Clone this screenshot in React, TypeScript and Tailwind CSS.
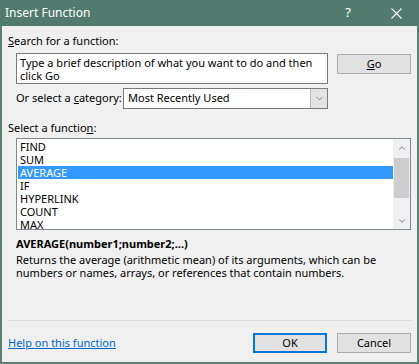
import { ChevronDown, ChevronUp } from "lucide-react";

const functions = ["FIND", "SUM", "AVERAGE", "IF", "HYPERLINK", "COUNT", "MAX"];

export default function App() {
  return (
    <div className="w-[419px] h-[364px] flex flex-col font-['Noto_Sans',sans-serif] text-[11px] text-black select-none">
      {/* Title bar */}
      <div className="h-[26px] bg-[#517b6e] flex items-center text-white">
        <span className="pl-[5px] text-[12px]">Insert Function</span>
        <span className="ml-auto w-[46px] text-center text-[13px] mr-[2px]">?</span>
        <span className="w-[46px] flex justify-center">
          <svg width="11" height="11" viewBox="0 0 11 11">
            <path d="M0.5 0.5 L10.5 10.5 M10.5 0.5 L0.5 10.5" stroke="white" strokeWidth="1.1" />
          </svg>
        </span>
      </div>

      {/* Body */}
      <div className="flex-1 flex flex-col bg-[#f0f0f0] border-x-2 border-b-2 border-[#5d7f74]">
        <div className="pl-[6px] pt-[7px] leading-[15px]">
          <span className="underline">S</span>earch for a function:
        </div>

        <div className="flex items-start mt-[5px] pl-[14px]">
          <div className="w-[312px] h-[31px] bg-white border border-[#7a7a7a] px-[3px] pt-[2px] leading-[13px]">
            Type a brief description of what you want to do and then click Go
          </div>
          <button className="ml-[9px] mt-[1px] w-[74px] h-[20px] bg-[#e1e1e1] border border-[#adadad] leading-[18px]">
            <span className="underline">G</span>o
          </button>
        </div>

        <div className="flex items-center mt-[4px] pl-[14px] h-[21px]">
          <span className="w-[107px] whitespace-nowrap">
            Or select a <span className="underline">c</span>ategory:
          </span>
          <div className="w-[205px] h-[21px] bg-white border border-[#7a7a7a] flex items-center">
            <span className="pl-[4px]">Most Recently Used</span>
            <span className="ml-auto w-[17px] h-full bg-[#e3e3e3] border-l border-[#b9b9b9] flex items-center justify-center">
              <ChevronDown size={11} strokeWidth={1.5} color="#606060" />
            </span>
          </div>
        </div>

        <div className="pl-[6px] mt-[11px] leading-[15px]">
          Select a functio<span className="underline">n</span>:
        </div>

        <div className="ml-[14px] mt-[3px] w-[395px] h-[92px] bg-white border border-[#828790] flex">
          <div className="flex-1 pt-[1px] pl-[1px]">
            {functions.map((f) => (
              <div
                key={f}
                className={
                  f === "AVERAGE"
                    ? "h-[13px] leading-[13px] pl-[2px] bg-[#3399ff] text-white"
                    : "h-[13px] leading-[13px] pl-[2px]"
                }
              >
                {f}
              </div>
            ))}
          </div>
          <div className="w-[17px] bg-[#f0f0f0] flex flex-col items-center">
            <div className="h-[17px] flex items-center justify-center">
              <ChevronUp size={10} strokeWidth={1.8} color="#606060" />
            </div>
            <div className="w-[15px] h-[40px] mt-[2px] bg-[#cdcdcd]" />
            <div className="mt-auto h-[17px] flex items-center justify-center">
              <ChevronDown size={10} strokeWidth={1.8} color="#606060" />
            </div>
          </div>
        </div>

        <div className="pl-[14px] mt-[6px] leading-[15px] font-bold">AVERAGE(number1;number2;...)</div>
        <div className="pl-[14px] mt-[2px] leading-[13px] w-[400px]">
          Returns the average (arithmetic mean) of its arguments, which can be numbers or names, arrays, or references that contain numbers.
        </div>

        <div className="mt-auto ml-[5px] w-[405px] h-px bg-[#dcdcdc]" />
        <div className="flex items-center pt-[12px] pb-[9px] pr-[6px]">
          <a href="#" className="pl-[6px] text-[#0066cc] underline">
            Help on this function
          </a>
          <button className="ml-auto w-[74px] h-[20px] bg-[#e1e1e1] border-2 border-[#0078d7] leading-[16px]">OK</button>
          <button className="ml-[10px] w-[74px] h-[20px] bg-[#e1e1e1] border border-[#adadad] leading-[18px]">Cancel</button>
        </div>
      </div>
    </div>
  );
}
